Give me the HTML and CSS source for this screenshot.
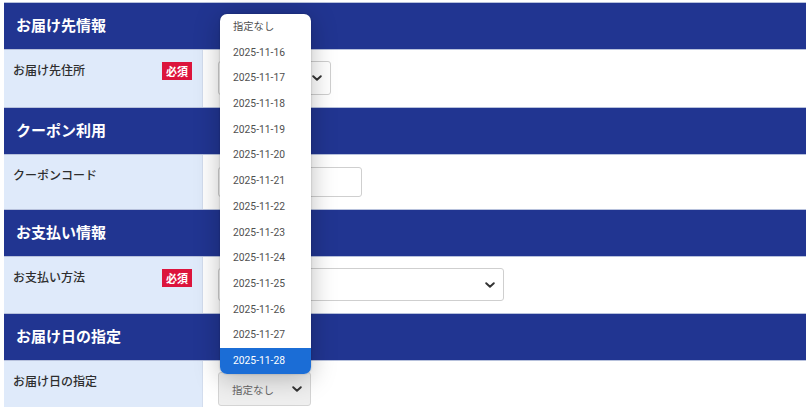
FILE: index.html
```html
<!DOCTYPE html>
<html lang="ja">
<head>
<meta charset="utf-8">
<title>注文フォーム</title>
<link rel="stylesheet" href="styles.css">
</head>
<body>
<div class="form">
  <section class="block">
    <h2 class="block-title">お届け先情報</h2>
    <div class="row">
      <div class="label"><span>お届け先住所</span><span class="req">必須</span></div>
      <div class="field">
        <div class="select select-addr"><span class="select-text"></span><svg class="chev" viewBox="0 0 10 6"><path d="M1.2 1.2 5 4.8 8.8 1.2"/></svg></div>
      </div>
    </div>
  </section>
  <section class="block">
    <h2 class="block-title">クーポン利用</h2>
    <div class="row row-short">
      <div class="label"><span>クーポンコード</span></div>
      <div class="field">
        <div class="input input-coupon"></div>
      </div>
    </div>
  </section>
  <section class="block">
    <h2 class="block-title">お支払い情報</h2>
    <div class="row">
      <div class="label"><span>お支払い方法</span><span class="req">必須</span></div>
      <div class="field">
        <div class="select select-pay"><span class="select-text"></span><svg class="chev" viewBox="0 0 10 6"><path d="M1.2 1.2 5 4.8 8.8 1.2"/></svg></div>
      </div>
    </div>
  </section>
  <section class="block">
    <h2 class="block-title">お届け日の指定</h2>
    <div class="row row-last">
      <div class="label"><span>お届け日の指定</span></div>
      <div class="field">
        <div class="select select-date"><span class="select-text">指定なし</span><svg class="chev" viewBox="0 0 10 6"><path d="M1.2 1.2 5 4.8 8.8 1.2"/></svg></div>
      </div>
    </div>
  </section>

  <ul class="dropdown">
    <li>指定なし</li>
    <li>2025-11-16</li>
    <li>2025-11-17</li>
    <li>2025-11-18</li>
    <li>2025-11-19</li>
    <li>2025-11-20</li>
    <li>2025-11-21</li>
    <li>2025-11-22</li>
    <li>2025-11-23</li>
    <li>2025-11-24</li>
    <li>2025-11-25</li>
    <li>2025-11-26</li>
    <li>2025-11-27</li>
    <li class="selected">2025-11-28</li>
  </ul>
</div>
</body>
</html>
```

FILE: styles.css
```css
* { box-sizing: border-box; }

html, body {
  margin: 0;
  padding: 0;
  background: #ffffff;
}

body {
  font-family: "Noto Sans CJK JP", "Noto Sans", sans-serif;
  color: #333;
}

.form {
  position: relative;
  width: 802px;
  margin: 2px 0 0 4px;
}

.block-title {
  margin: 0;
  height: 47px;
  border-top: 1px solid #b7c1dc;
  background: #213591;
  color: #ffffff;
  font-size: 15px;
  font-weight: 700;
  line-height: 44px;
  padding-left: 12px;
}

.row {
  display: flex;
  border-top: 1px solid #b7c1dc;
  min-height: 57px;
}

.row-short { min-height: 55px; }
.row-last { min-height: 47px; }

.label {
  width: 199px;
  flex: 0 0 199px;
  background: #dfeafa;
  border-right: 1px solid #d3ddee;
  display: flex;
  justify-content: space-between;
  align-items: flex-start;
  padding: 11px 10px 0 9px;
  font-size: 12px;
  font-weight: 500;
  line-height: 18px;
  color: #2e2e2e;
}

.req {
  margin-top: 1px;
  background: #dc143c;
  color: #fff;
  font-size: 11px;
  font-weight: 700;
  line-height: 18px;
  height: 18px;
  padding: 0 4px;
  font-family: "Noto Sans CJK JP", serif;
}

.field {
  flex: 1;
  padding: 11px 0 12px 15px;
  background: #ffffff;
}

.row-last .field { padding-bottom: 0; }

.select, .input {
  border: 1px solid #cfcfcf;
  border-radius: 3px;
  background: #fff;
}

.select {
  height: 34px;
  display: flex;
  align-items: center;
  justify-content: space-between;
  padding: 0 8px 0 13px;
}

.select-addr { width: 113px; }
.select-pay { width: 286px; height: 33px; }
.select-date {
  width: 93px;
  background: #efefef;
  border-color: #d4d4d4;
}

.select-text {
  font-size: 10.5px;
  color: #666;
}

.input-coupon {
  width: 144px;
  height: 30px;
  margin-top: 1px;
}

.chev {
  width: 10px;
  height: 6px;
  fill: none;
  stroke: #333;
  stroke-width: 1.9;
  stroke-linecap: round;
  stroke-linejoin: round;
}

.dropdown {
  position: absolute;
  left: 216px;
  top: 12px;
  width: 91px;
  margin: 0;
  padding: 0;
  list-style: none;
  background: #ffffff;
  border-radius: 7px;
  overflow: hidden;
  box-shadow: 0 4px 26px rgba(0, 0, 0, 0.26), 0 0 2px rgba(0, 0, 0, 0.25);
}

.dropdown li {
  height: 25.7px;
  line-height: 25.7px;
  padding-left: 13px;
  font-family: Roboto, "Noto Sans CJK JP", sans-serif;
  font-size: 10.3px;
  color: #505050;
}

.dropdown li.selected {
  background: #1b6dd6;
  color: #ffffff;
}
```
